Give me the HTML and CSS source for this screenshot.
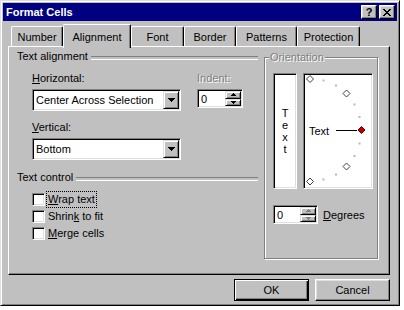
FILE: index.html
```html
<!DOCTYPE html>
<html lang="en">
<head>
    <meta charset="UTF-8">
    <title>Format Cells</title>
    <link rel="stylesheet" href="styles.css">
</head>
<body>
    <div class="window">
        <div class="titlebar">
            <span class="title">Format Cells</span>
            <div class="caption-btns">
                <span class="cap-btn help">?</span>
                <span class="cap-btn">
                    <svg width="8" height="7" viewBox="0 0 8 7"><path d="M0 0h2v1h1v1h2V1h1V0h2v1H7v1H6v1H5v1h1v1h1v1h1v1H6V6H5V5H3v1H2v1H0V6h1V5h1V4h1V3H2V2H1V1H0z"/></svg>
                </span>
            </div>
        </div>

        <div class="client">
            <div class="tabs">
                <div class="tab" style="width: 52px">Number</div>
                <div class="tab active" style="width: 68px">Alignment</div>
                <div class="tab" style="width: 53px">Font</div>
                <div class="tab" style="width: 52px">Border</div>
                <div class="tab" style="width: 61px">Patterns</div>
                <div class="tab" style="width: 63px">Protection</div>
            </div>

            <div class="panel">
                <div class="left-col">
                    <div class="group-head">Text alignment</div>

                    <div class="field-row">
                        <div class="field">
                            <div class="label"><u>H</u>orizontal:</div>
                            <div class="combo">
                                <span class="combo-text">Center Across Selection</span>
                                <span class="drop-btn">
                                    <svg width="7" height="4"><path d="M0 0h7v1H0zM1 1h5v1H1zM2 2h3v1H2zM3 3h1v1H3z"/></svg>
                                </span>
                            </div>
                        </div>
                        <div class="field indent">
                            <div class="label disabled">Indent:</div>
                            <div class="spin">
                                <span class="spin-text">0</span>
                                <span class="spin-btns">
                                    <span class="spin-btn"><svg width="5" height="3"><path d="M2 0h1v1H2zM1 1h3v1H1zM0 2h5v1H0z"/></svg></span>
                                    <span class="spin-btn"><svg width="5" height="3"><path d="M0 0h5v1H0zM1 1h3v1H1zM2 2h1v1H2z"/></svg></span>
                                </span>
                            </div>
                        </div>
                    </div>

                    <div class="field vertical">
                        <div class="label"><u>V</u>ertical:</div>
                        <div class="combo">
                            <span class="combo-text">Bottom</span>
                            <span class="drop-btn">
                                <svg width="7" height="4"><path d="M0 0h7v1H0zM1 1h5v1H1zM2 2h3v1H2zM3 3h1v1H3z"/></svg>
                            </span>
                        </div>
                    </div>

                    <div class="group-head control-head">Text control</div>

                    <div class="checks">
                        <div class="check-row"><span class="checkbox"></span><span class="check-label focused"><u>W</u>rap text</span></div>
                        <div class="check-row"><span class="checkbox"></span><span class="check-label">Shrin<u>k</u> to fit</span></div>
                        <div class="check-row"><span class="checkbox"></span><span class="check-label"><u>M</u>erge cells</span></div>
                    </div>
                </div>

                <div class="orient">
                    <span class="orient-title disabled">Orientation</span>
                    <div class="orient-boxes">
                        <div class="vtext">
                            <span>T</span><span>e</span><span>x</span><span>t</span>
                        </div>
                        <div class="dial">
                            <svg width="66" height="112" viewBox="0 0 66 112">
                                <g fill="#b8b8b8">
                                    <rect x="17.5" y="4.5" width="2" height="2"/>
                                    <rect x="30" y="9.5" width="2" height="2"/>
                                    <rect x="48.5" y="28.5" width="2" height="2"/>
                                    <rect x="53.5" y="41" width="2" height="2"/>
                                    <rect x="53.5" y="67.5" width="2" height="2"/>
                                    <rect x="48.5" y="80" width="2" height="2"/>
                                    <rect x="30" y="98.5" width="2" height="2"/>
                                    <rect x="17.5" y="103.5" width="2" height="2"/>
                                </g>
                                <g fill="#fff" stroke="#404040" stroke-width="1">
                                    <path d="M5 0.5L8.5 4 5 7.5 1.5 4z"/>
                                    <path d="M41.5 15L45 18.5 41.5 22 38 18.5z"/>
                                    <path d="M41.5 88L45 91.5 41.5 95 38 91.5z"/>
                                    <path d="M5 103L8.5 106.5 5 110 1.5 106.5z"/>
                                </g>
                                <text x="4" y="60" font-family="Liberation Sans, Arial, sans-serif" font-size="11" fill="#000">Text</text>
                                <rect x="31" y="55" width="21" height="1" fill="#000"/>
                                <path d="M56.5 51.5L60 55 56.5 58.5 53 55z" fill="#c00000" stroke="#600000" stroke-width="1"/>
                            </svg>
                        </div>
                    </div>
                    <div class="degrees">
                        <div class="spin deg-spin">
                            <span class="spin-text">0</span>
                            <span class="spin-btns">
                                <span class="spin-btn"><svg width="5" height="3"><path d="M2 0h1v1H2zM1 1h3v1H1zM0 2h5v1H0z" fill="#808080"/></svg></span>
                                <span class="spin-btn"><svg width="5" height="3"><path d="M0 0h5v1H0zM1 1h3v1H1zM2 2h1v1H2z" fill="#808080"/></svg></span>
                            </span>
                        </div>
                        <span><u>D</u>egrees</span>
                    </div>
                </div>
            </div>

            <div class="buttons">
                <div class="btn default">OK</div>
                <div class="btn">Cancel</div>
            </div>
        </div>
    </div>
</body>
</html>
```

FILE: styles.css
```css
* {
    box-sizing: border-box;
}
body {
    margin: 0;
    background: #fff;
    font-family: "Liberation Sans", Arial, sans-serif;
    font-size: 11px;
    color: #000;
}
u {
    text-decoration: underline;
    text-underline-offset: 1px;
}
.window {
    width: 400px;
    height: 306px;
    background: #c0c0c0;
    border: 1px solid;
    border-color: #dfdfdf #000 #000 #dfdfdf;
    box-shadow: inset 1px 1px #fff, inset -1px -1px #808080;
    padding: 2px;
    display: flex;
    flex-direction: column;
}
.titlebar {
    height: 18px;
    background: #000080;
    color: #fff;
    font-weight: bold;
    display: flex;
    align-items: center;
    padding: 0 2px 0 3px;
}
.caption-btns {
    margin-left: auto;
    display: flex;
    gap: 2px;
}
.cap-btn {
    width: 16px;
    height: 14px;
    background: #c0c0c0;
    color: #000;
    border: 1px solid;
    border-color: #fff #000 #000 #fff;
    box-shadow: inset -1px -1px #808080, inset 1px 1px #dfdfdf;
    display: flex;
    align-items: center;
    justify-content: center;
    font-size: 11px;
    line-height: 1;
}
.cap-btn svg {
    display: block;
}
.client {
    padding: 3px 7px 0 5px;
    display: flex;
    flex-direction: column;
}
.tabs {
    height: 22px;
    padding-left: 3px;
    display: flex;
    align-items: flex-end;
}
.tab {
    height: 20px;
    border: 1px solid;
    border-color: #fff #000 transparent #fff;
    border-bottom: none;
    border-radius: 2px 2px 0 0;
    box-shadow: inset -1px 0 #808080;
    display: flex;
    align-items: center;
    justify-content: center;
}
.tab.active {
    height: 24px;
    margin-bottom: -2px;
    position: relative;
    z-index: 1;
    background: #c0c0c0;
}
.panel {
    height: 229px;
    border: 1px solid;
    border-color: #fff #000 #000 #fff;
    box-shadow: inset -1px -1px #808080;
    padding: 3px 0 0 8px;
    display: flex;
    align-items: flex-start;
}
.left-col {
    width: 241px;
    display: flex;
    flex-direction: column;
}
.group-head {
    height: 13px;
    line-height: 13px;
    display: flex;
    align-items: center;
    gap: 3px;
    white-space: nowrap;
}
.group-head::after {
    content: "";
    flex: 1;
    height: 2px;
    margin-top: 2px;
    border-top: 1px solid #808080;
    border-bottom: 1px solid #fff;
}
.control-head {
    margin-top: 11px;
}
.field-row {
    display: flex;
    margin-top: 9px;
    padding-left: 15px;
}
.field {
    display: flex;
    flex-direction: column;
}
.field.indent {
    margin-left: 16px;
}
.field.vertical {
    margin-top: 10px;
    padding-left: 15px;
}
.label {
    height: 13px;
    line-height: 13px;
}
.disabled {
    color: #808080;
    text-shadow: 1px 1px #fff;
}
.combo,
.spin,
.checkbox,
.vtext,
.dial {
    background: #fff;
    border: 1px solid;
    border-color: #808080 #fff #fff #808080;
    box-shadow: inset 1px 1px #000, inset -1px -1px #dfdfdf;
}
.combo {
    margin-top: 4px;
    width: 149px;
    height: 22px;
    padding: 1px;
    display: flex;
    align-items: center;
}
.combo-text {
    padding-left: 2px;
}
.drop-btn,
.spin-btn {
    background: #c0c0c0;
    border: 1px solid;
    border-color: #dfdfdf #000 #000 #dfdfdf;
    box-shadow: inset 1px 1px #fff, inset -1px -1px #808080;
    display: flex;
    align-items: center;
    justify-content: center;
}
.drop-btn {
    margin-left: auto;
    width: 16px;
    height: 18px;
}
.drop-btn svg,
.spin-btn svg {
    display: block;
}
.spin {
    margin-top: 4px;
    width: 46px;
    height: 19px;
    padding: 1px;
    display: flex;
    align-items: center;
}
.spin-text {
    padding-left: 2px;
}
.spin-btns {
    margin-left: auto;
    width: 16px;
    height: 15px;
    display: flex;
    flex-direction: column;
}
.spin-btn {
    flex: 1;
}
.checks {
    margin-top: 7px;
    padding-left: 15px;
    display: flex;
    flex-direction: column;
}
.check-row {
    height: 17px;
    display: flex;
    align-items: center;
    gap: 3px;
}
.checkbox {
    width: 13px;
    height: 13px;
}
.check-label {
    line-height: 13px;
}
.check-label.focused {
    outline: 1px dotted #000;
    outline-offset: 1px;
}
.orient {
    margin: 7px 0 0 6px;
    width: 114px;
    height: 202px;
    border: 1px solid #808080;
    box-shadow: inset 1px 1px #fff, 1px 1px #fff;
    padding: 0 4px 0 8px;
    display: flex;
    flex-direction: column;
}
.orient-title {
    align-self: flex-start;
    margin: -7px 0 0 -4px;
    padding: 0 1px;
    height: 13px;
    line-height: 13px;
    background: #c0c0c0;
}
.orient-boxes {
    margin-top: 9px;
    height: 116px;
    display: flex;
    gap: 6px;
}
.vtext {
    width: 24px;
    display: flex;
    flex-direction: column;
    align-items: center;
    justify-content: center;
    line-height: 12px;
}
.dial {
    width: 70px;
    padding: 1px;
}
.dial svg {
    display: block;
}
.degrees {
    margin-top: 16px;
    display: flex;
    align-items: center;
    gap: 5px;
}
.deg-spin {
    margin-top: 0;
    width: 45px;
}
.buttons {
    margin-top: 4px;
    display: flex;
    justify-content: flex-end;
    gap: 6px;
}
.btn {
    width: 75px;
    height: 22px;
    border: 1px solid;
    border-color: #fff #000 #000 #fff;
    box-shadow: inset -1px -1px #808080, inset 1px 1px #dfdfdf;
    display: flex;
    align-items: center;
    justify-content: center;
}
.btn.default {
    border-color: #000;
    box-shadow: inset 1px 1px #fff, inset -1px -1px #000, inset -2px -2px #808080;
}
```
